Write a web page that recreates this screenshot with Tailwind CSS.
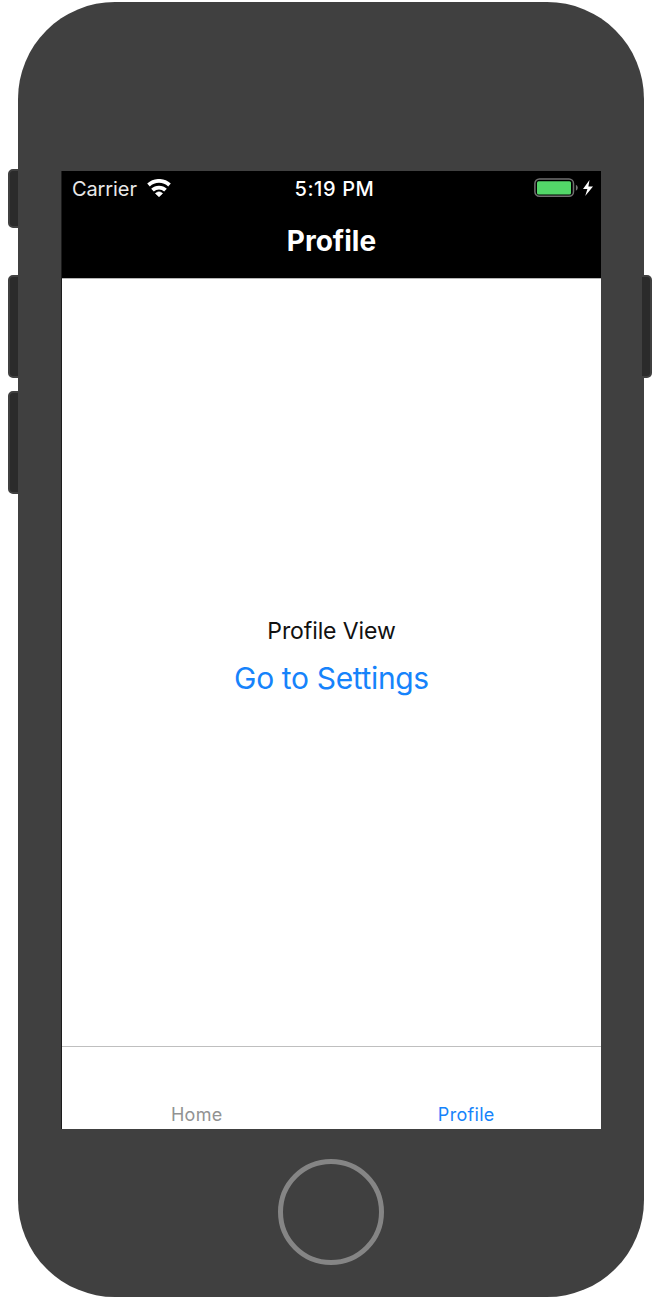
<!DOCTYPE html>
<html lang="en">
<head>
<meta charset="utf-8">
<title>Profile</title>
<script src="https://cdn.jsdelivr.net/npm/@tailwindcss/browser@4"></script>
</head>
<body class="bg-white font-['Inter',sans-serif]">
<div class="relative h-[1300px] w-[662px] overflow-hidden bg-white pl-[17.7px] pt-[2.4px]">
  <!-- side buttons -->
  <div class="absolute left-[7.5px] top-[169px] h-[59px] w-5 rounded-[5px] border-2 border-[#404040] bg-[#2b2b2b]"></div>
  <div class="absolute left-[7.5px] top-[275px] h-[103px] w-5 rounded-[5px] border-2 border-[#404040] bg-[#2b2b2b]"></div>
  <div class="absolute left-[7.5px] top-[391px] h-[103px] w-5 rounded-[5px] border-2 border-[#404040] bg-[#2b2b2b]"></div>

  <div class="relative flex h-[1294.8px] w-[626.4px] flex-col items-center rounded-[97px] bg-[#404040] pt-[168.6px]">
    <main class="ml-[1.2px] flex h-[958px] w-[539px] shrink-0 flex-col bg-white shadow-[-1px_0_0_#1c1c1c]">
      <header class="h-[107px] bg-black text-white">
        <div class="grid h-[36px] grid-cols-3 items-center">
          <div class="flex items-center gap-[10px] pl-[10px]">
            <span class="text-[20px] leading-[36px] tracking-[-0.1px] text-[#e8e8e8]">Carrier</span>
            <svg class="mb-[2px] h-[18px] w-6" viewBox="0 0 24 18" fill="none" stroke="#fff" stroke-width="3.8"><path d="M1.5 6a15.4 15.4 0 0 1 21 0M5.5 11.2a9.3 9.3 0 0 1 13 0"/><path d="M12 17.8l-3.6-3.4a5.5 5.5 0 0 1 7.2 0z" fill="#fff" stroke="#fff" stroke-width=".6"/></svg>
          </div>
          <div class="pl-[6px] text-center text-[20px] font-medium leading-[36px] tracking-[0.6px]">5:19 PM</div>
          <div class="flex items-center justify-end pr-[7px]">
            <svg class="mb-[2px] h-5 w-[60px]" viewBox="0 0 60 20"><rect x=".9" y="1" width="38.6" height="17.3" rx="4.5" fill="none" stroke="#707070" stroke-width="1.5"/><rect x="3" y="3.2" width="34" height="13.2" rx="1.5" fill="#53d769"/><path d="M41.9 6.8q1.9 1 1.9 3t-1.9 3z" fill="#777"/><path d="M55.5 2L49 11h4.4l-2.2 7L59 8.5h-4.6z" fill="#fff"/></svg>
          </div>
        </div>
        <h1 class="text-center text-[28px] font-bold leading-[69px]">Profile</h1>
      </header>
      <section class="flex h-[768px] flex-col items-center border-t border-[#b5b5b5] pt-[332px]">
        <p class="text-[23px] leading-[40px] tracking-[-0.1px] text-[#111]">Profile View</p>
        <button class="mt-[2px] text-[30px] leading-[50px] tracking-[-0.35px] text-[#1683fb]">Go to Settings</button>
      </section>
      <nav class="grid h-[83px] grid-cols-2 items-end border-t border-[#bfbfbf] text-center text-[18px] leading-[29px] tracking-[0.3px]">
        <span class="text-[#929292]">Home</span>
        <span class="text-[#1683fb]">Profile</span>
      </nav>
    </main>
    <div class="mt-[30px] size-[106px] shrink-0 rounded-full border-[5px] border-[#858585]"></div>
  </div>

  <div class="absolute left-[642px] top-[275px] h-[103px] w-[10px] rounded-r-[5px] border-y-2 border-r-2 border-[#404040] bg-[#2b2b2b]"></div>
</div>
</body>
</html>
